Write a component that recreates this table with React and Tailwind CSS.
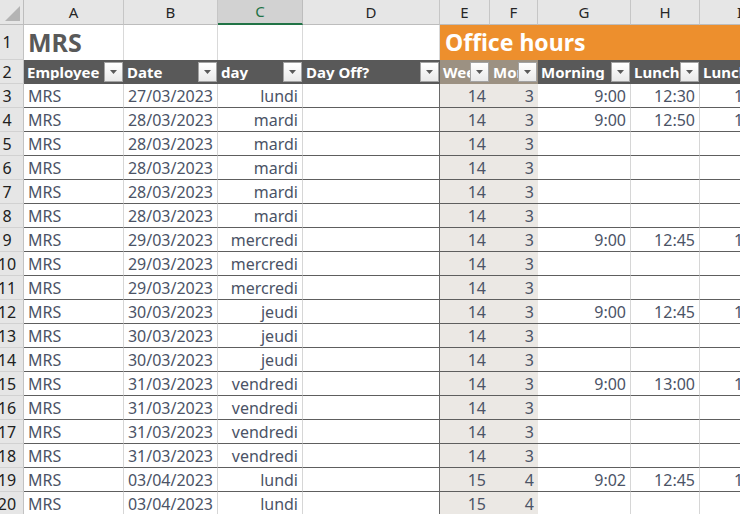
import React from "react";

const GRID =
  "grid grid-cols-[24px_100px_94px_85px_137px_50px_48px_93px_69px_80px]";

const rows = [
  [3, "27/03/2023", "lundi", "14", "3", "9:00", "12:30", "13:30"],
  [4, "28/03/2023", "mardi", "14", "3", "9:00", "12:50", "13:50"],
  [5, "28/03/2023", "mardi", "14", "3", "", "", ""],
  [6, "28/03/2023", "mardi", "14", "3", "", "", ""],
  [7, "28/03/2023", "mardi", "14", "3", "", "", ""],
  [8, "28/03/2023", "mardi", "14", "3", "", "", ""],
  [9, "29/03/2023", "mercredi", "14", "3", "9:00", "12:45", "13:45"],
  [10, "29/03/2023", "mercredi", "14", "3", "", "", ""],
  [11, "29/03/2023", "mercredi", "14", "3", "", "", ""],
  [12, "30/03/2023", "jeudi", "14", "3", "9:00", "12:45", "13:45"],
  [13, "30/03/2023", "jeudi", "14", "3", "", "", ""],
  [14, "30/03/2023", "jeudi", "14", "3", "", "", ""],
  [15, "31/03/2023", "vendredi", "14", "3", "9:00", "13:00", "14:00"],
  [16, "31/03/2023", "vendredi", "14", "3", "", "", ""],
  [17, "31/03/2023", "vendredi", "14", "3", "", "", ""],
  [18, "31/03/2023", "vendredi", "14", "3", "", "", ""],
  [19, "03/04/2023", "lundi", "15", "4", "9:02", "12:45", "13:45"],
  [20, "03/04/2023", "lundi", "15", "4", "", "", ""],
];

function Drop() {
  return (
    <div className="shrink-0 w-[19px] h-[20px] mr-[1px] border border-[#a3a3a3] bg-gradient-to-b from-[#ffffff] to-[#e9e9e9] flex items-center justify-center">
      <svg width="7" height="4" viewBox="0 0 7 4">
        <polygon points="0,0 7,0 3.5,4" fill="#5a5a5a" />
      </svg>
    </div>
  );
}

function HeadCell({ label, bg }) {
  return (
    <div className={`flex items-center h-[24px] overflow-hidden ${bg}`}>
      <span className="flex-1 min-w-0 overflow-hidden whitespace-nowrap pl-[3px] text-white font-bold text-[15px] leading-none">
        {label}
      </span>
      <Drop />
    </div>
  );
}

function RowHead({ n, h }) {
  return (
    <div
      className={`bg-[#e6e6e6] border-r border-r-[#c2c2c2] border-b border-b-[#d2d2d2] flex items-center ${h}`}
    >
      <span className="w-[14px] text-center text-[16px] text-[#202020] leading-none whitespace-nowrap flex justify-center">
        {n}
      </span>
    </div>
  );
}

export default function App() {
  const colHeads = ["A", "B", "C", "D", "E", "F", "G", "H", "I"];
  return (
    <div className="w-[740px] h-[514px] overflow-hidden bg-white font-['Noto_Sans',sans-serif]">
      <div className="w-[780px]">
        {/* column letters */}
        <div className={`${GRID} h-[25px]`}>
          <div className="bg-[#e6e6e6] border-r border-r-[#bdbdbd] border-b border-b-[#bdbdbd] flex items-end justify-end pr-[3px] pb-[3px]">
            <svg width="15" height="15" viewBox="0 0 15 15">
              <polygon points="15,0 15,15 0,15" fill="#b4b4b4" />
            </svg>
          </div>
          {colHeads.map((c) =>
            c === "C" ? (
              <div
                key={c}
                className="bg-[#d2d2d2] border-r border-r-[#bdbdbd] border-b-2 border-b-[#217346] flex items-center justify-center text-[15px] text-[#217346]"
              >
                {c}
              </div>
            ) : (
              <div
                key={c}
                className="bg-[#e6e6e6] border-r border-r-[#c6c6c6] border-b border-b-[#bdbdbd] flex items-center justify-center text-[15px] text-[#262626]"
              >
                {c}
              </div>
            )
          )}
        </div>

        {/* row 1 */}
        <div className={`${GRID} h-[35px]`}>
          <RowHead n={1} h="h-[35px]" />
          <div className="border-r border-r-[#d9d9d9] flex items-center pl-[4px] text-[25px] font-bold text-[#595959] leading-none">
            MRS
          </div>
          <div className="border-r border-r-[#d9d9d9]" />
          <div className="border-r border-r-[#d9d9d9]" />
          <div className="border-r border-r-[#d9d9d9]" />
          <div className="col-span-5 bg-[#ed8f2d] flex items-center pl-[5px] text-white font-bold text-[23px] leading-none whitespace-nowrap">
            Office hours
          </div>
        </div>

        {/* row 2 */}
        <div className={`${GRID} h-[24px]`}>
          <RowHead n={2} h="h-[24px]" />
          <HeadCell label="Employee" bg="bg-[#595959]" />
          <HeadCell label="Date" bg="bg-[#595959]" />
          <HeadCell label="day" bg="bg-[#595959]" />
          <HeadCell label="Day Off?" bg="bg-[#595959]" />
          <HeadCell label="Week" bg="bg-[#9c9182]" />
          <HeadCell label="Month" bg="bg-[#9c9182]" />
          <HeadCell label="Morning" bg="bg-[#595959]" />
          <HeadCell label="Lunch" bg="bg-[#595959]" />
          <HeadCell label="Lunch end" bg="bg-[#595959]" />
        </div>

        {/* data rows */}
        {rows.map(([n, date, day, wk, mo, morn, lunch, lend]) => (
          <div
            key={n}
            className={`${GRID} h-[24px] text-[16px] text-[#4b5366] leading-none`}
          >
            <RowHead n={n} h="h-[24px]" />
            <div className="border-r border-r-[#d6d6d6] border-b border-b-[#5e5e5e] flex items-center pl-[4px]">
              MRS
            </div>
            <div className="border-r border-r-[#d6d6d6] border-b border-b-[#5e5e5e] flex items-center justify-end pr-[4px]">
              {date}
            </div>
            <div className="border-r border-r-[#d6d6d6] border-b border-b-[#5e5e5e] flex items-center justify-end pr-[4px]">
              {day}
            </div>
            <div className="border-r border-r-[#6a6a6a] border-b border-b-[#5e5e5e]" />
            <div className="bg-[#ebe8e4] border-b border-b-[#5e5e5e] flex items-center justify-end pr-[4px]">
              {wk}
            </div>
            <div className="bg-[#ebe8e4] border-b border-b-[#5e5e5e] flex items-center justify-end pr-[4px]">
              {mo}
            </div>
            <div className="border-r border-r-[#d6d6d6] border-b border-b-[#5e5e5e] flex items-center justify-end pr-[4px]">
              {morn}
            </div>
            <div className="border-r border-r-[#d6d6d6] border-b border-b-[#5e5e5e] flex items-center justify-end pr-[4px]">
              {lunch}
            </div>
            <div className="border-r border-r-[#d6d6d6] border-b border-b-[#5e5e5e] flex items-center justify-end pr-[4px]">
              {lend}
            </div>
          </div>
        ))}
      </div>
    </div>
  );
}
